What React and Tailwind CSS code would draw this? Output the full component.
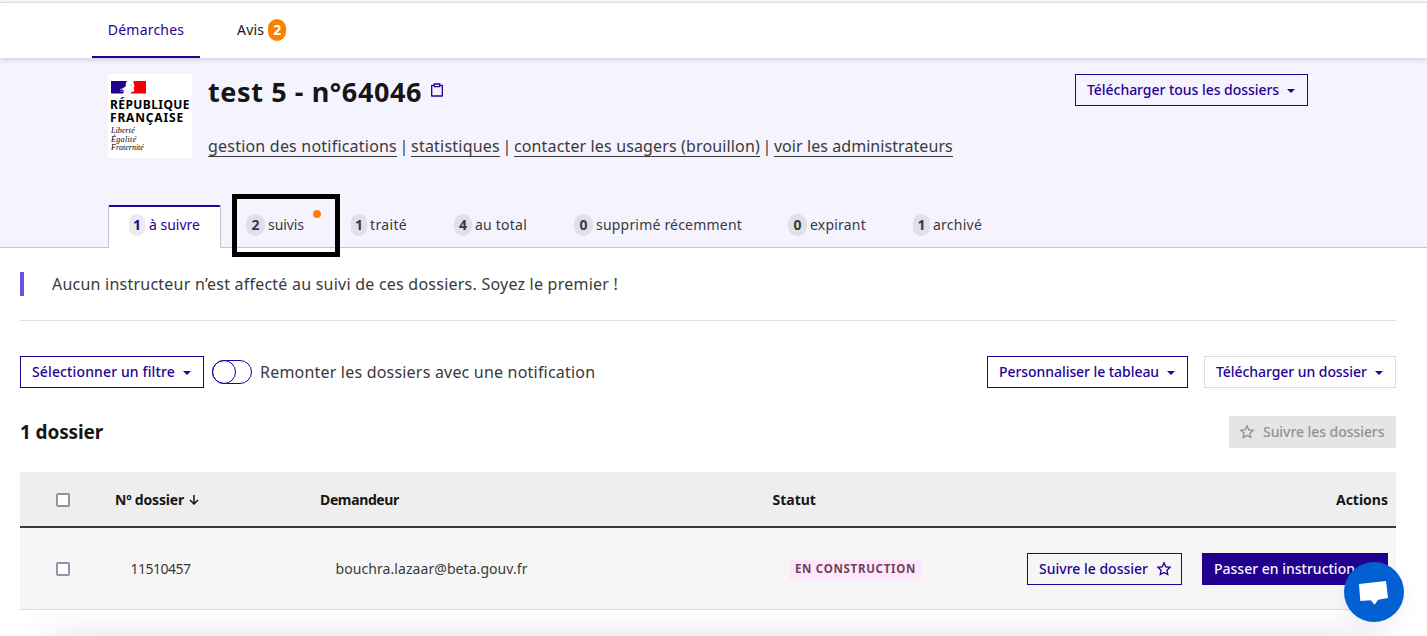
import clsx from "clsx";

const tabs = [
  { count: 2, label: "suivis", width: "w-[105px]", badge: "w-[19px]", text: "tracking-[-0.07px]", dot: true },
  { count: 1, label: "traité", width: "w-[103px]", badge: "w-4", text: "tracking-[0.34px]" },
  { count: 4, label: "au total", width: "w-[120px]", badge: "w-[18px]", text: "tracking-[0.23px]" },
  { count: 0, label: "supprimé récemment", width: "w-[214px]", badge: "w-[19px]", text: "tracking-[0.2px]" },
  { count: 0, label: "expirant", width: "w-[125px]", badge: "w-[19px]", text: "tracking-[0.21px]" },
  { count: 1, label: "archivé", width: "w-[80px]", badge: "w-[17px]", text: "tracking-[0.24px]" },
];

function Caret() {
  return (
    <svg className="h-4 w-4 shrink-0" viewBox="0 0 16 16" fill="currentColor">
      <path d="M4 7h8l-4 4z" />
    </svg>
  );
}

function Star() {
  return (
    <svg className="h-4 w-4 shrink-0" viewBox="0 0 24 24" fill="currentColor">
      <path d="M12 18.26L4.947 22.208L6.522 14.28L.587 8.792L8.614 7.84L12 .5L15.386 7.84L23.413 8.792L17.478 14.28L19.053 22.208L12 18.26ZM12 15.968L16.247 18.345L15.298 13.572L18.871 10.267L14.038 9.694L12 5.275L9.962 9.695L5.129 10.267L8.702 13.572L7.753 18.345L12 15.968Z" />
    </svg>
  );
}

function Clipboard() {
  return (
    <svg className="h-4 w-4" viewBox="0 0 24 24" fill="#270194">
      <path d="M7 4V2H17V4H20.007C20.556 4 21 4.445 21 4.993V21.007C21 21.556 20.555 22 20.007 22H3.993C3.444 22 3 21.555 3 21.007V4.993C3 4.444 3.445 4 3.993 4H7ZM7 6H5V20H19V6H17V8H7V6ZM9 4V6H15V4H9Z" />
    </svg>
  );
}

function Button({ children, className, width }) {
  return (
    <button
      className={clsx(
        "flex h-8 items-center border pl-[11px] pr-2 text-sm font-medium whitespace-nowrap",
        width,
        className
      )}
    >
      {children}
    </button>
  );
}

function Logo() {
  return (
    <div className="flex h-[84px] w-[84px] flex-col bg-white pl-0.5 pt-[7px] whitespace-nowrap text-black">
      <svg className="ml-[1px] h-[13px] w-9 shrink-0" viewBox="0 0 36 13">
        <path d="M0 0h35v12.500H0z" fill="#fff" />
        <path d="M0 0h16l-1.500 3 .5 2-4 3 2 2-1 2.500H0z" fill="#21008f" />
        <path d="M22.500 0H35v12.500H19.500l1-1.500 2.500-.5.200-2-.6-1.500.9-1.500-.5-2z" fill="#f50000" />
        <path d="M9 8.500l4.500-1.500M9.500 10.500l5-1.500" stroke="#d6d2ee" strokeWidth=".8" fill="none" />
        <path d="M19.500 4.500h1.500" stroke="#8c85b8" strokeWidth=".6" fill="none" />
      </svg>
      <div className="mt-1 text-[12px] leading-[13px] font-bold tracking-[0.42px]">RÉPUBLIQUE</div>
      <div className="text-[12px] leading-[13px] font-bold tracking-[0.83px]">FRANÇAISE</div>
      <div className="mt-[3px] ml-px font-['Liberation_Serif',serif] text-[8px] leading-[8.5px] italic">
        <div className="tracking-[0.1px]">Liberté</div>
        <div className="tracking-[0.35px]">Égalité</div>
        <div>Fraternité</div>
      </div>
    </div>
  );
}

function HeaderLink({ children, className }) {
  return (
    <a className={clsx("border-b border-[#3a3a3a] leading-[19px]", className)}>
      {children}
    </a>
  );
}

function Count({ children, className, color = "bg-[#e1dfe9]" }) {
  return (
    <span className={clsx("flex h-[22px] shrink-0 items-center justify-center rounded-full font-bold", color, className)}>
      {children}
    </span>
  );
}

function Checkbox() {
  return <span className="ml-9 block h-3.5 w-3.5 rounded-[2px] border-2 border-[#9691a5] bg-white" />;
}

export default function App() {
  return (
    <div className="relative flex h-[636px] w-[1427px] flex-col overflow-hidden bg-white font-['Noto_Sans',sans-serif] text-[#3a3a3a]">
      <nav className="relative z-10 mt-0.5 flex h-14 shrink-0 border-t border-[#ddd] bg-white pl-[92px] text-sm shadow-[0_1px_6px_rgba(0,0,18,0.2)]">
        <a className="flex w-[108px] justify-center border-b-2 border-[#270194] pt-[17px] leading-5 tracking-[0.2px] text-[#270194]">
          Démarches
        </a>
        <a className="ml-[37px] flex h-[54px] items-center gap-1 text-[#161616]">
          <span className="tracking-[0.2px]">Avis</span>
          <span className="flex h-[22px] w-[18px] items-center justify-center rounded-full bg-[#ff8000] font-bold text-white">2</span>
        </a>
      </nav>

      <header className="flex h-[190px] shrink-0 flex-col bg-[#f5f3fe]">
        <div className="flex items-start pt-4 pr-[119px] pl-[108px]">
          <Logo />
          <div className="ml-4 flex-1 whitespace-nowrap">
            <div className="flex h-9 items-center">
              <h1 className="w-[215px] text-[27px] leading-9 font-bold tracking-[0.6px] text-[#161616]">test 5 - n°64046</h1>
              <span className="mb-1 ml-1.5"><Clipboard /></span>
            </div>
            <div className="mt-[27px] flex text-base">
              <HeaderLink className="tracking-[0.21px]">gestion des notifications</HeaderLink>
              <span className="w-3.5 text-center leading-[19px]">|</span>
              <HeaderLink className="tracking-[0.22px]">statistiques</HeaderLink>
              <span className="w-3.5 text-center leading-[19px]">|</span>
              <HeaderLink className="tracking-[0.14px]">contacter les usagers (brouillon)</HeaderLink>
              <span className="w-3.5 text-center leading-[19px]">|</span>
              <HeaderLink className="tracking-[0.07px]">voir les administrateurs</HeaderLink>
            </div>
          </div>
          <Button width="w-[233px]" className="justify-between border-[#270194] text-[#270194]">
            <span className="tracking-[-0.04px]">Télécharger tous les dossiers</span>
            <Caret />
          </Button>
        </div>

        <div className="mt-auto flex h-[43px] text-sm whitespace-nowrap">
          <div className="w-[108px] border-b border-[#c5c3cd]" />
          <div className="flex w-[113px] items-start gap-1 rounded-t-[2px] border-x border-t-2 border-x-[#c5c3cd] border-t-[#270194] bg-white pt-[7px] pl-5 leading-[22px] text-[#270194]">
            <Count className="w-4" color="bg-[#ebebeb]">1</Count>
            <span>à suivre</span>
          </div>
          <div className="flex flex-1 border-b border-[#c5c3cd] pt-[9px] pl-[25px] leading-[22px]">
            {tabs.map((tab) => (
              <div key={tab.label} className={clsx("relative flex gap-[3px]", tab.width)}>
                <Count className={tab.badge}>{tab.count}</Count>
                <span className={tab.text}>{tab.label}</span>
                {tab.dot && (
                  <>
                    <span className="absolute top-[-4px] left-[67px] h-2 w-2 rounded-full bg-[#ff8000]" />
                    <span className="absolute top-[-20px] left-[-14px] h-[63px] w-[108px] border-[5px] border-black" />
                  </>
                )}
              </div>
            ))}
          </div>
        </div>
      </header>

      <main className="px-5 pt-6 pr-[31px] whitespace-nowrap">
        <p className="h-6 border-l-4 border-[#6f4ce8] pl-7 text-base leading-6 tracking-[0.23px]">
          Aucun instructeur n’est affecté au suivi de ces dossiers. Soyez le premier !
        </p>
        <div className="mt-6 h-px bg-[#ddd]" />

        <div className="mt-[35px] flex h-8 items-center">
          <Button width="w-[184px]" className="justify-between border-[#270194] text-[#270194]">
            <span className="tracking-[0.13px]">Sélectionner un filtre</span>
            <Caret />
          </Button>
          <span className="ml-2 flex h-6 w-10 rounded-full border border-[#270194]">
            <span className="-m-px h-6 w-6 rounded-full border border-[#270194]" />
          </span>
          <span className="ml-2 flex-1 text-base tracking-[0.2px]">Remonter les dossiers avec une notification</span>
          <Button width="w-[201px]" className="justify-between border-[#270194] text-[#270194]">
            <span className="tracking-[-0.06px]">Personnaliser le tableau</span>
            <Caret />
          </Button>
          <Button width="w-[192px]" className="ml-4 justify-between border-[#ddd] text-[#270194]">
            <span className="tracking-[-0.06px]">Télécharger un dossier</span>
            <Caret />
          </Button>
        </div>

        <div className="mt-7 flex h-8 items-center justify-between">
          <h2 className="text-[19px] font-bold tracking-[-0.13px] text-[#161616]">1 dossier</h2>
          <Button width="w-[167px]" className="gap-2 border-[#e5e5e5] bg-[#e5e5e5] pl-[9px]! text-[#929292]">
            <Star />
            <span className="tracking-[-0.06px]">Suivre les dossiers</span>
          </Button>
        </div>

        <div className="mt-6 text-sm">
          <div className="grid h-14 grid-cols-[95px_205px_452.5px_1fr_auto] items-center border-b-2 border-[#3a3a3a] bg-[#eee] pt-0.5 pr-2 font-bold text-[#161616]">
            <Checkbox />
            <span className="flex items-center gap-[5px]">
              <span className="tracking-[-0.19px]">Nº dossier</span>
              <svg className="h-2.5 w-2.5" viewBox="0 0 10 10" fill="none" stroke="currentColor" strokeWidth="1.500">
                <path d="M5 0v9M1 5l4 4 4-4" />
              </svg>
            </span>
            <span className="tracking-[-0.37px]">Demandeur</span>
            <span>Statut</span>
            <span>Actions</span>
          </div>
          <div className="grid h-[82px] grid-cols-[110.5px_205px_453.5px_1fr_auto] items-center border-b border-[#ddd] bg-[#f6f6f6] pr-2">
            <Checkbox />
            <span className="tracking-[-0.51px]">11510457</span>
            <span className="tracking-[0.07px]">bouchra.lazaar@beta.gouv.fr</span>
            <span className="mt-0.5 flex h-5 w-[133px] items-center justify-center rounded bg-[#fee7fc] text-[11.5px] font-bold tracking-[0.7px] text-[#6e445a]">
              EN CONSTRUCTION
            </span>
            <div className="flex gap-5">
              <Button width="w-[155px]" className="justify-between border-[#270194] pr-[9px]! text-[#270194]">
                <span>Suivre le dossier</span>
                <Star />
              </Button>
              <Button width="w-[186px]" className="border-[#21008f] bg-[#21008f] text-[#f5f5fe]">
                Passer en instruction
              </Button>
            </div>
          </div>
        </div>
      </main>

      <div className="absolute top-[652px] left-[60px] h-20 w-[1307px] shadow-[0_0_40px_10px_rgba(0,0,0,0.16)]" />
      <button className="absolute top-[562px] left-[1344px] flex h-[60px] w-[60px] items-center justify-center rounded-full bg-[#0360d2] shadow-[0_6px_20px_rgba(0,0,0,0.06)]">
        <svg className="h-[60px] w-[60px]" viewBox="0 0 60 60">
          <path d="M15 22L42 19L44 36L34 37.700L30.700 42.700L26.700 38.300L16.300 39z" fill="#fff" />
        </svg>
      </button>
    </div>
  );
}
